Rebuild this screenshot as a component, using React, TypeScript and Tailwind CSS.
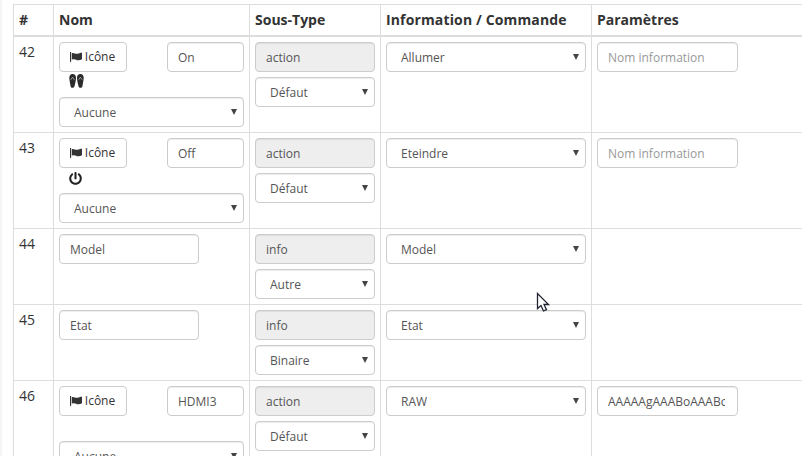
import React from "react";
import { FaPowerOff } from "react-icons/fa";

const font = "font-['Open_Sans',sans-serif]";
const field = "block h-[30px] rounded border border-[#ccc] text-[12px] text-[#555] shadow-[inset_0_1px_1px_rgba(0,0,0,0.075)] outline-none bg-white";
const cell = "border border-[#ddd] p-[5px] align-top";

function Sel({ value, w }: { value: string; w: string }) {
  return (
    <div className={`relative ${w}`}>
      <select defaultValue={value} className={`${field} w-full appearance-none pl-[14px] pr-5 pt-[2px]`}>
        <option>{value}</option>
      </select>
      <span className="absolute right-[7px] top-[12px] h-0 w-0 border-x-[3px] border-t-[6px] border-x-transparent border-t-[#444]" />
    </div>
  );
}

function Txt({ value, w, placeholder, disabled }: { value?: string; w: string; placeholder?: string; disabled?: boolean }) {
  return (
    <input
      readOnly
      defaultValue={value}
      placeholder={placeholder}
      disabled={disabled}
      className={`${field} ${w} pl-[10px] pr-3 pt-[2px] placeholder:text-[#999] disabled:bg-[#eee]`}
    />
  );
}

function Flag() {
  return (
    <svg width="12" height="10" viewBox="0 0 12 10" fill="#333">
      <rect x="0" y="0" width="1.100" height="10" />
      <path d="M1.800 1.200C3.500.2 5.500 2.200 7.500 1.800S10.500.8 12 .8v6.400c-1.500.8-3 1.400-4.800 1S3.500 6.800 1.800 7.800z" />
    </svg>
  );
}

function Flops() {
  return (
    <svg width="15" height="14" viewBox="0 0 15 14" fill="#2b2b2b">
      <path d="M3.600 0C1.500 0 .2 1.500.3 4c.2 3 1.100 7 1.400 8.700.2 1.400 3.200 1.400 3.600 0C5.800 10.700 7 7 7 4 7 1.500 5.700 0 3.600 0z" />
      <path d="M11.400 0C9.300 0 8 1.500 8 4c0 3 1.200 6.700 1.700 8.700.4 1.400 3.400 1.400 3.600 0 .3-1.700 1.200-5.700 1.400-8.700C14.800 1.500 13.500 0 11.400 0z" />
      <path d="M1.800 5.800 3.600 3.200l1.800 2.600M9.600 5.800l1.800-2.600 1.800 2.600" fill="none" stroke="#ddd" strokeWidth="0.6" />
    </svg>
  );
}

function CmdName({ name, icon }: { name: string; icon?: React.ReactNode }) {
  return (
    <>
      <div className="flex justify-between">
        <button className="flex h-[30px] w-[68px] items-center justify-center gap-[3px] rounded border border-[#ccc] bg-white pr-[1px] text-[12px] text-[#333]">
          <Flag />
          Icône
        </button>
        <Txt value={name} w="w-[77px]" />
      </div>
      <div className="flex h-[25px] items-start pl-[10px] pt-[2px]">{icon}</div>
      <Sel value="Aucune" w="w-[185px]" />
    </>
  );
}

function SubType({ kind, sub }: { kind: string; sub: string }) {
  return (
    <div className="flex flex-col gap-[5px]">
      <Txt value={kind} w="w-[120px]" disabled />
      <Sel value={sub} w="w-[120px]" />
    </div>
  );
}

function Row({ n, name, sub, kind, cmd, param, placeholder }: { n: number; name: React.ReactNode; sub: string; kind: string; cmd: string; param?: string; placeholder?: string }) {
  return (
    <tr>
      <td className={`${cell} text-[14px] leading-[20px] text-[#333]`}>{n}</td>
      <td className={cell}>{name}</td>
      <td className={cell}><SubType kind={kind} sub={sub} /></td>
      <td className={cell}><Sel value={cmd} w="w-[200px]" /></td>
      <td className={cell}>
        {(param || placeholder) && <Txt value={param} placeholder={placeholder} w="w-[141px]" />}
      </td>
    </tr>
  );
}

export default function App() {
  const th = "border border-b-2 border-[#ddd] px-[5px] text-left align-middle text-[14px] font-bold text-[#333]";
  return (
    <div className={`relative h-[456px] w-[802px] overflow-hidden border-l-2 border-[#f5f5f5] bg-white pl-[11px] pt-[4px] ${font}`}>
      <table className="w-[800px] table-fixed border-collapse">
        <colgroup>
          <col className="w-[40px]" />
          <col className="w-[196px]" />
          <col className="w-[131px]" />
          <col className="w-[211px]" />
          <col className="w-[222px]" />
        </colgroup>
        <thead>
          <tr className="h-[31px]">
            <th className={th}>#</th>
            <th className={th}>Nom</th>
            <th className={th}>Sous-Type</th>
            <th className={`${th} tracking-[0.14px]`}>Information / Commande</th>
            <th className={th}>Paramètres</th>
          </tr>
        </thead>
        <tbody>
          <Row n={42} name={<CmdName name="On" icon={<Flops />} />} kind="action" sub="Défaut" cmd="Allumer" placeholder="Nom information" />
          <Row n={43} name={<CmdName name="Off" icon={<FaPowerOff className="mt-[2px] h-[13px] w-[13px] text-[#222]" />} />} kind="action" sub="Défaut" cmd="Eteindre" placeholder="Nom information" />
          <Row n={44} name={<Txt value="Model" w="w-[140px]" />} kind="info" sub="Autre" cmd="Model" />
          <Row n={45} name={<Txt value="Etat" w="w-[140px]" />} kind="info" sub="Binaire" cmd="Etat" />
          <Row n={46} name={<CmdName name="HDMI3" />} kind="action" sub="Défaut" cmd="RAW" param="AAAAAgAAABoAAABcAAAA" />
        </tbody>
      </table>
      <svg className="absolute left-[533px] top-[292px]" width="16" height="22" viewBox="0 0 16 22">
        <path d="M2.500 1.500v15l3.500-3 2.500 5.500 3-1.300-2.500-5.200h4.500z" fill="#fff" stroke="#1f2430" strokeWidth="1.300" strokeLinejoin="miter" />
      </svg>
    </div>
  );
}
